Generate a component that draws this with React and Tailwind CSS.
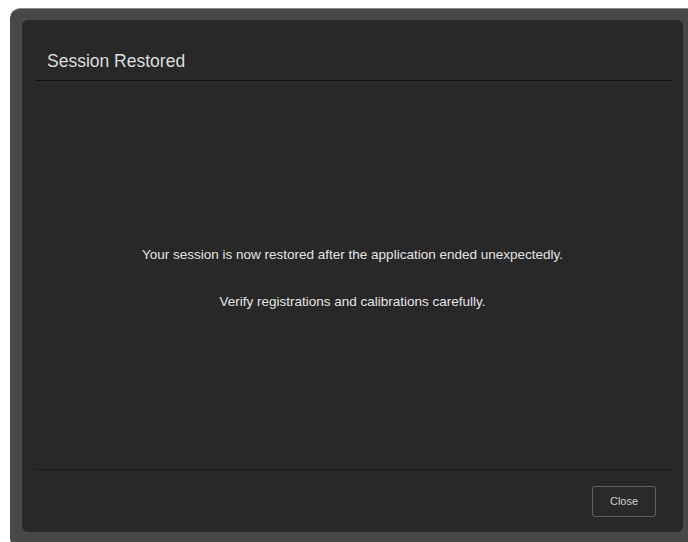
import React from 'react';

const SessionRestoredDialog = () => {
    return (
        <div className="w-[688px] h-[542px] bg-white overflow-hidden pt-[8px] pl-[10px] font-['Liberation_Sans',Arial,sans-serif]">
            {/* outer window frame */}
            <div className="w-[690px] h-[540px] bg-[#484848] border-t border-[#8c8c8c] rounded-[10px] pt-[11px] pl-[12px]">
                {/* dialog panel */}
                <div className="w-[661px] h-[512px] bg-[#282828] rounded-[6px] flex flex-col">
                    <div className="h-[60px] pt-[33px] pl-[25px]">
                        <h2 className="text-[17.5px] leading-none text-[#dedede]">Session Restored</h2>
                    </div>
                    <div className="ml-[13px] mr-[11px] h-px bg-[#121212]"></div>

                    <div className="flex-1 flex flex-col items-center justify-center gap-[34px] pt-[6px] text-[13.5px] leading-none text-[#e4e4e4]">
                        <p>Your session is now restored after the application ended unexpectedly.</p>
                        <p>Verify registrations and calibrations carefully.</p>
                    </div>

                    <div className="ml-[13px] mr-[11px] h-px bg-[#1c1c1c]"></div>
                    <div className="h-[62px] flex items-start justify-end pt-[16px] pr-[27px]">
                        <button className="w-[64px] h-[31px] rounded-[3px] border border-[#5e5e5e] bg-[#2a2a2a] text-[11px] text-[#d0d0d0]">
                            Close
                        </button>
                    </div>
                </div>
            </div>
        </div>
    );
};

export default function App() {
    return <SessionRestoredDialog />;
}
